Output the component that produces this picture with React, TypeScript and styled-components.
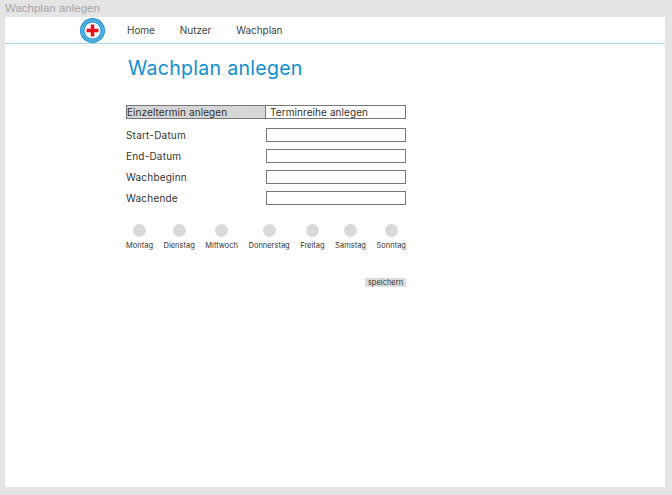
import * as React from 'react';
import styled, { createGlobalStyle } from 'styled-components';

const GlobalStyle = createGlobalStyle`
  html, body {
    margin: 0;
    padding: 0;
    background: #e4e4e4;
  }
`;

const Window = styled.div`
  width: 672px;
  height: 495px;
  box-sizing: border-box;
  padding: 0 7px 8px 5px;
  display: flex;
  flex-direction: column;
  overflow: hidden;
  font-family: Inter, 'Open Sans', sans-serif;
  color: #333;
`;

const WindowTitle = styled.div`
  height: 17px;
  line-height: 17px;
  font-family: 'Liberation Sans', Arial, sans-serif;
  font-size: 11.5px;
  color: #a4a4a4;
`;

const Canvas = styled.div`
  flex: 1;
  background: #fff;
  display: flex;
  flex-direction: column;
`;

const Nav = styled.nav`
  height: 26px;
  border-bottom: 1px solid #a9d3e6;
  display: flex;
  align-items: center;
  padding-left: 75px;
`;

const Logo = styled.svg`
  width: 25px;
  height: 25px;
  margin-right: 22px;
  flex: none;
`;

const NavItem = styled.a`
  font-size: 10px;
  line-height: 12px;
  letter-spacing: -0.05px;
  margin-top: -1px;
  color: #444;
  margin-right: 25px;
`;

const Main = styled.main`
  width: 280px;
  margin-left: 121px;
  display: flex;
  flex-direction: column;
`;

const Heading = styled.h1`
  margin: 12px 0 24px 2px;
  height: 25px;
  font-size: 19.5px;
  line-height: 25px;
  font-weight: 400;
  letter-spacing: 0.3px;
  color: #0f8fd0;
  white-space: nowrap;
`;

const Tabs = styled.div`
  display: grid;
  grid-template-columns: 140px 140px;
  height: 14px;
  margin-bottom: 9px;
`;

const Tab = styled.div<{ $active?: boolean }>`
  box-sizing: border-box;
  border: 1px solid #777;
  border-left-width: ${(p) => (p.$active ? '1px' : '0')};
  background: ${(p) => (p.$active ? '#d6d6d6' : '#fff')};
  padding-left: ${(p) => (p.$active ? '0' : '4px')};
  font-size: 10px;
  line-height: 12px;
  letter-spacing: 0.08px;
  color: #333;
  white-space: nowrap;
`;

const Row = styled.label`
  display: grid;
  grid-template-columns: 140px 140px;
  height: 14px;
  margin-bottom: 7px;
  align-items: center;
  font-size: 10px;
  letter-spacing: 0.2px;
  color: #333;
`;

const Field = styled.input`
  box-sizing: border-box;
  width: 140px;
  height: 14px;
  margin: 0;
  padding: 0;
  border: 1px solid #777;
  border-radius: 0;
  background: #fff;
`;

const Days = styled.div`
  display: flex;
  justify-content: space-between;
  margin-top: 12px;
`;

const Day = styled.div`
  display: flex;
  flex-direction: column;
  align-items: center;
  gap: 4px;
`;

const Dot = styled.span`
  width: 13px;
  height: 13px;
  border-radius: 50%;
  background: #d9d9d9;
`;

const DayLabel = styled.span`
  font-size: 7.5px;
  line-height: 10px;
  color: #333;
`;

const Actions = styled.div`
  display: flex;
  justify-content: flex-end;
  margin-top: 27px;
`;

const SaveButton = styled.button`
  width: 41px;
  height: 9px;
  padding: 0;
  border: 0;
  background: #dcdcdc;
  font-family: inherit;
  font-size: 7.5px;
  line-height: 9px;
  color: #333;
`;

const days = ['Montag', 'Dienstag', 'Mittwoch', 'Donnerstag', 'Freitag', 'Samstag', 'Sonntag'];
const fields = ['Start-Datum', 'End-Datum', 'Wachbeginn', 'Wachende'];

const DrkLogo = () => (
  <Logo viewBox="0 0 25 25">
    <circle cx="12.5" cy="12.5" r="12.5" fill="#1a93d2" />
    <circle cx="12.5" cy="12.5" r="11" fill="none" stroke="#a5d6ef" strokeWidth="0.6" />
    <circle cx="12.5" cy="12.5" r="9.6" fill="none" stroke="#a5d6ef" strokeWidth="0.6" />
    <circle cx="12.5" cy="12.5" r="8" fill="#fff" />
    <path d="M10.7 6.5h3.6v4.2h4.2v3.6h-4.2v4.2h-3.6v-4.2H6.5v-3.6h4.2z" fill="#e4121c" />
  </Logo>
);

export default function App() {
  return (
    <Window>
      <GlobalStyle />
      <WindowTitle>Wachplan anlegen</WindowTitle>
      <Canvas>
        <Nav>
          <DrkLogo />
          <NavItem>Home</NavItem>
          <NavItem>Nutzer</NavItem>
          <NavItem>Wachplan</NavItem>
        </Nav>
        <Main>
          <Heading>Wachplan anlegen</Heading>
          <Tabs>
            <Tab $active>Einzeltermin anlegen</Tab>
            <Tab>Terminreihe anlegen</Tab>
          </Tabs>
          {fields.map((field) => (
            <Row key={field}>
              {field}
              <Field />
            </Row>
          ))}
          <Days>
            {days.map((day) => (
              <Day key={day}>
                <Dot />
                <DayLabel>{day}</DayLabel>
              </Day>
            ))}
          </Days>
          <Actions>
            <SaveButton>speichern</SaveButton>
          </Actions>
        </Main>
      </Canvas>
    </Window>
  );
}
